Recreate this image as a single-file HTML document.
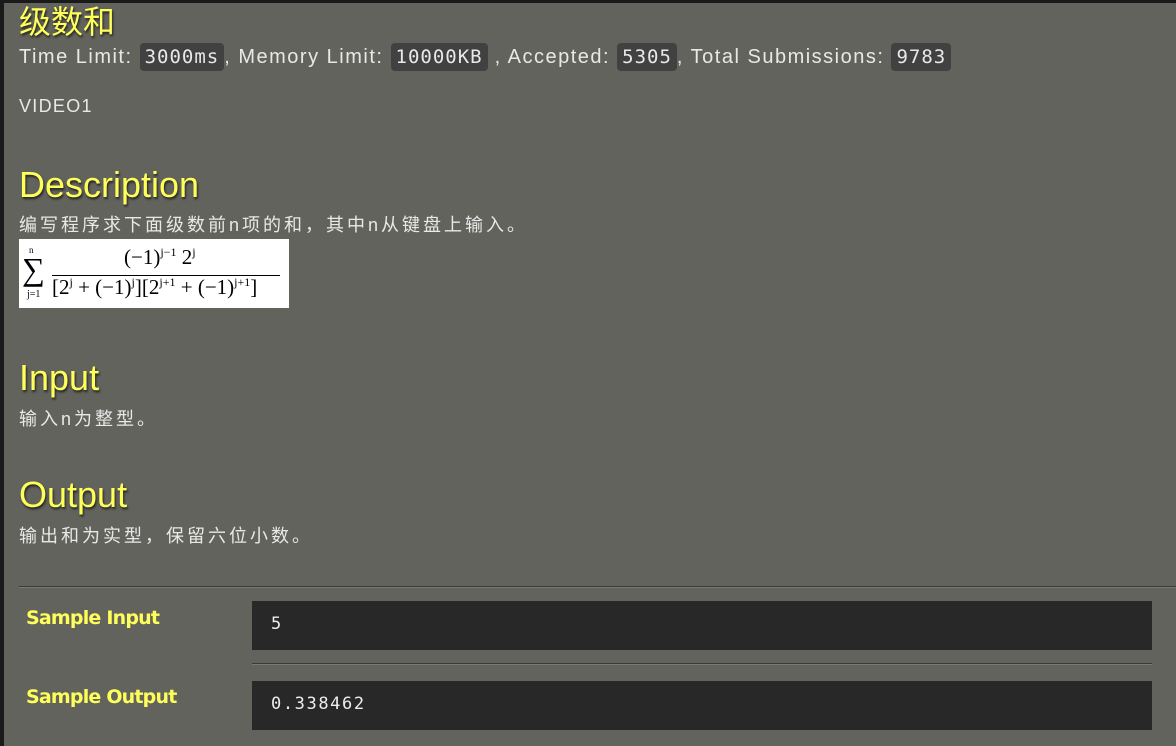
<!DOCTYPE html>
<html><head><meta charset="utf-8"><style>
body{margin:0;width:1176px;height:746px;overflow:hidden;background:#63635d;font-family:"Liberation Sans","Noto Sans CJK SC",sans-serif;color:#e8e8e8;position:relative}
.lb{position:absolute;left:0;top:0;width:4px;height:746px;background:#1a1a1a}
.tb{position:absolute;left:0;top:0;width:1176px;height:3px;background:#1a1a1a}
.a{position:absolute;white-space:nowrap}
.y{color:#ffff5a;text-shadow:1px 2px 2px #222}
.h{font-size:36px;}
.t{font-size:18px;letter-spacing:1.3px}
.cn{font-size:18px;letter-spacing:3px}
code{font-family:"DejaVu Sans Mono",monospace;background:#414141;border-radius:4px;padding:3px 5px;font-size:19px;letter-spacing:1px}
.box{position:absolute;left:252px;width:900px;height:49px;background:#282828;font-family:"DejaVu Sans Mono",monospace;font-size:17px;color:#eee;line-height:46px;padding-left:19px;box-sizing:border-box;letter-spacing:1.6px}
.lab{font-weight:bold;font-size:19px;color:#ffff5a;font-family:"DejaVu Sans","Liberation Sans",sans-serif;letter-spacing:-0.8px}
</style></head><body>
<div class="tb"></div><div class="lb"></div>
<div class="a y" style="left:19px;top:-3px;font-size:32px;">级数和</div>
<div class="a" style="left:19px;top:46px;font-size:20px;letter-spacing:1.5px">Time Limit: <code>3000ms</code>, Memory Limit: <code>10000KB</code> , Accepted: <code>5305</code>, Total Submissions: <code>9783</code></div>
<div class="a t" style="left:19px;top:96px;">VIDEO1</div>
<div class="a y h" style="left:19px;top:164px;">Description</div>
<div class="a cn" style="left:19px;top:211px;">编写程序求下面级数前n项的和，其中n从键盘上输入。</div>
<div class="a" style="left:19px;top:239px;width:270px;height:69px;background:#fff;color:#000;font-family:'Liberation Serif',serif;">
<div class="a" style="left:3px;top:12px;font-size:32px">∑</div>
<div class="a" style="left:10px;top:6px;font-size:9px">n</div>
<div class="a" style="left:8px;top:50px;font-size:10px">j=1</div>
<div class="a" style="left:105px;top:6px;font-size:21px">(−1)<sup style="font-size:12px">j−1</sup> 2<sup style="font-size:12px">j</sup></div>
<div class="a" style="left:33px;top:36px;width:228px;height:1px;background:#000"></div>
<div class="a" style="left:33px;top:36px;font-size:21px">[2<sup style="font-size:12px">j</sup> + (−1)<sup style="font-size:12px">j</sup>][2<sup style="font-size:12px">j+1</sup> + (−1)<sup style="font-size:12px">j+1</sup>]</div>
</div>
<div class="a y h" style="left:19px;top:357px;">Input</div>
<div class="a cn" style="left:19px;top:405px;">输入n为整型。</div>
<div class="a y h" style="left:19px;top:474px;">Output</div>
<div class="a cn" style="left:19px;top:522px;">输出和为实型，保留六位小数。</div>
<div class="a" style="left:19px;top:586px;width:1157px;height:1px;background:#3a3a3a;border-bottom:1px solid #7a7a74"></div>
<div class="a lab" style="left:26px;top:607px;">Sample Input</div>
<div class="box" style="top:601px">5</div>
<div class="a" style="left:252px;top:663px;width:900px;height:1px;background:#3a3a3a;border-bottom:1px solid #7a7a74"></div>
<div class="a lab" style="left:26px;top:686px;">Sample Output</div>
<div class="box" style="top:681px">0.338462</div>
</body></html>
